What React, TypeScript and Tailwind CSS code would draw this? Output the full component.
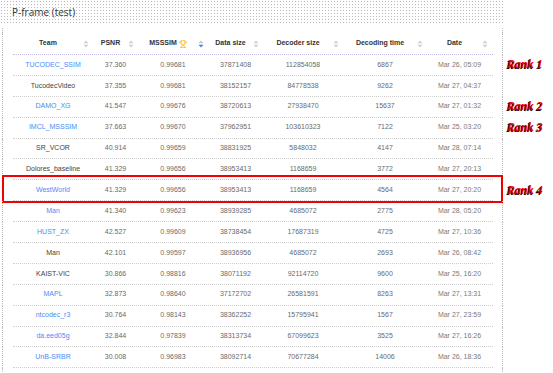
import React from 'react';
import { Trophy } from 'lucide-react';

type Row = {
  team: string;
  link: boolean;
  psnr: string;
  msssim: string;
  data: string;
  decoder: string;
  time: string;
  date: string;
  rank?: string;
  boxed?: boolean;
};

const rows: Row[] = [
  { team: 'TUCODEC_SSIM', link: true, psnr: '37.360', msssim: '0.99681', data: '37871408', decoder: '112854058', time: '6867', date: 'Mar 26, 05:09', rank: 'Rank 1' },
  { team: 'TucodecVideo', link: false, psnr: '37.355', msssim: '0.99681', data: '38152157', decoder: '84778538', time: '9262', date: 'Mar 27, 04:37' },
  { team: 'DAMO_XG', link: true, psnr: '41.547', msssim: '0.99676', data: '38720613', decoder: '27938470', time: '15637', date: 'Mar 27, 01:32', rank: 'Rank 2' },
  { team: 'IMCL_MSSSIM', link: true, psnr: '37.663', msssim: '0.99670', data: '37962951', decoder: '103610323', time: '7122', date: 'Mar 25, 03:20', rank: 'Rank 3' },
  { team: 'SR_VCOR', link: false, psnr: '40.914', msssim: '0.99659', data: '38831925', decoder: '5848032', time: '4147', date: 'Mar 28, 07:14' },
  { team: 'Dolores_baseline', link: false, psnr: '41.329', msssim: '0.99656', data: '38953413', decoder: '1168659', time: '3772', date: 'Mar 27, 20:13' },
  { team: 'WestWorld', link: true, psnr: '41.329', msssim: '0.99656', data: '38953413', decoder: '1168659', time: '4564', date: 'Mar 27, 20:20', rank: 'Rank 4', boxed: true },
  { team: 'Man', link: true, psnr: '41.340', msssim: '0.99623', data: '38939285', decoder: '4685072', time: '2775', date: 'Mar 28, 05:20' },
  { team: 'HUST_ZX', link: true, psnr: '42.527', msssim: '0.99609', data: '38738454', decoder: '17687319', time: '4725', date: 'Mar 27, 10:36' },
  { team: 'Man', link: false, psnr: '42.101', msssim: '0.99597', data: '38936956', decoder: '4685072', time: '2693', date: 'Mar 26, 08:42' },
  { team: 'KAIST-VIC', link: false, psnr: '30.866', msssim: '0.98816', data: '38071192', decoder: '92114720', time: '9600', date: 'Mar 25, 16:20' },
  { team: 'MAPL', link: true, psnr: '32.873', msssim: '0.98640', data: '37172702', decoder: '26581591', time: '8263', date: 'Mar 27, 13:31' },
  { team: 'ntcodec_r3', link: true, psnr: '30.764', msssim: '0.98143', data: '38362252', decoder: '15795941', time: '1567', date: 'Mar 27, 23:59' },
  { team: 'da.eed05g', link: true, psnr: '32.844', msssim: '0.97839', data: '38313734', decoder: '67099623', time: '3525', date: 'Mar 27, 16:26' },
  { team: 'UnB-SRBR', link: true, psnr: '30.008', msssim: '0.96983', data: '38092714', decoder: '70677284', time: '14006', date: 'Mar 26, 18:36' },
];

const cols = 'grid grid-cols-[80px_45px_70px_55px_80px_84px_65px]';

function Sorter({ active }: { active?: boolean }) {
  return (
    <svg width="6" height="8" viewBox="0 0 6 8" className="shrink-0">
      <path d="M3 0.5 L5.5 3.2 L0.5 3.2 Z" fill={active ? '#c8c8c8' : '#cfcfcf'} />
      <path d="M3 7.5 L5.5 4.8 L0.5 4.8 Z" fill={active ? '#4a7cf0' : '#cfcfcf'} />
    </svg>
  );
}

function Head({ title, trophy, active }: { title: string; trophy?: boolean; active?: boolean }) {
  return (
    <div className="flex items-center pr-[4px]">
      <span className="flex-1 flex items-center justify-center gap-[2px] text-center">
        {title}
        {trophy && <Trophy size={8} strokeWidth={2.5} className="text-[#f5b82e]" />}
      </span>
      <Sorter active={active} />
    </div>
  );
}

export default function App() {
  return (
    <div className="w-[553px] h-[373px] bg-white overflow-hidden font-['Liberation_Sans',Arial,sans-serif]">
      <div className="w-[503px] h-[24px] bg-[radial-gradient(circle,#b9b9b9_0.7px,transparent_0.9px)] bg-[length:3px_3px] flex items-center pl-[12px]">
        <span className="text-[10px] text-[#333] font-['Open_Sans',sans-serif] leading-none">P-frame (test)</span>
      </div>

      <div className="flex">
        <div className="ml-[2px] w-[501px] h-[5px] mt-[4px] border-l border-r border-dotted border-[#bbb]" />
      </div>

      <div className="flex">
        <div className="ml-[2px] w-[501px] border-l border-r border-dotted border-[#bbb] pl-[10px] pr-[9px]">
          <div className={`${cols} h-[22px] items-center text-[7px] font-bold text-[#333] border-b border-dotted border-[#c5bfe8]`}>
            <Head title="Team" />
            <Head title="PSNR" />
            <Head title="MSSSIM" trophy active />
            <Head title="Data size" />
            <Head title="Decoder size" />
            <Head title="Decoding time" />
            <Head title="Date" />
          </div>
        </div>
      </div>

      {rows.map((r, i) => (
        <div key={i} className="flex">
          <div className="relative ml-[2px] w-[501px] border-l border-r border-dotted border-[#bbb] pl-[10px] pr-[9px]">
            <div className={`${cols} h-[20.9px] items-center text-center text-[7px] text-[#6a6a6a] border-b border-dotted border-[#cfcfcf]`}>
              <span className={r.link ? 'text-[#4a8cf5]' : 'text-[#444]'}>{r.team}</span>
              <span>{r.psnr}</span>
              <span>{r.msssim}</span>
              <span>{r.data}</span>
              <span>{r.decoder}</span>
              <span>{r.time}</span>
              <span className="text-[#7a7a7a]">{r.date}</span>
            </div>
            {r.boxed && (
              <div className="absolute -left-[1px] -right-[1px] -top-[5px] -bottom-[2px] border-2 border-[#f00000]" />
            )}
          </div>
          <div className="w-[50px] flex items-center pl-[4px]">
            {r.rank && (
              <span className="-mt-[2px] text-[12px] leading-none font-bold italic text-[#e00000] font-['Liberation_Serif',serif] [text-shadow:-1px_1px_0_#300]">
                {r.rank}
              </span>
            )}
          </div>
        </div>
      ))}

      <div className="flex">
        <div className="ml-[2px] w-[501px] h-[20px] border-l border-r border-dotted border-[#bbb]" />
      </div>
    </div>
  );
}
